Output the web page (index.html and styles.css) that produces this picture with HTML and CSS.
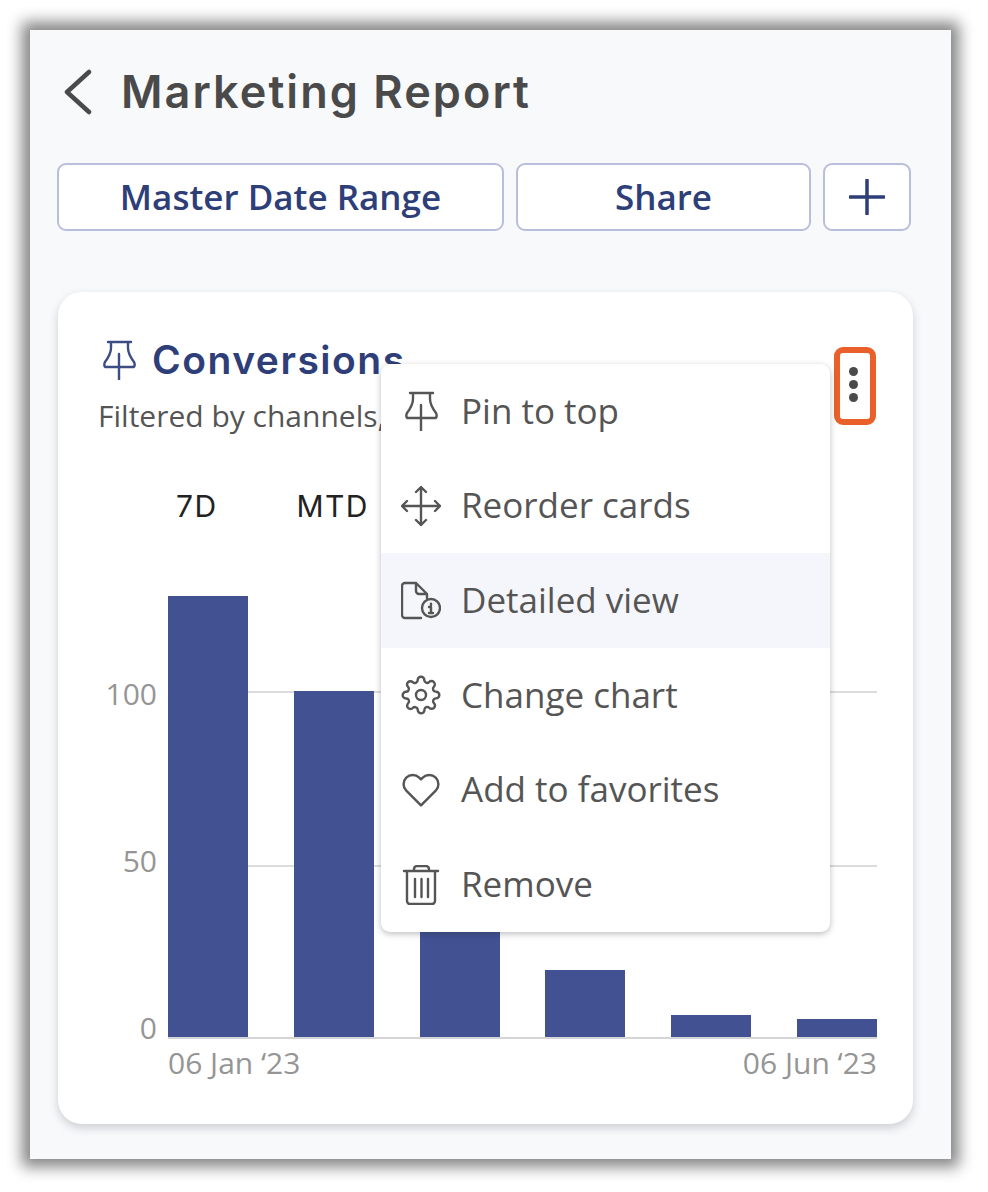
FILE: index.html
```html
<!DOCTYPE html>
<html lang="en">
<head>
<meta charset="utf-8">
<title>Marketing Report</title>
<link rel="stylesheet" href="styles.css">
</head>
<body>
<main class="frame">
  <header class="page-head">
    <svg class="back" viewBox="0 0 30 46" aria-hidden="true"><path d="M26 3 4 23l22 20"/></svg>
    <h1 class="page-title">Marketing Report</h1>
  </header>
  <div class="actions">
    <button class="btn btn-date">Master Date Range</button>
    <button class="btn btn-share">Share</button>
    <button class="btn btn-add" aria-label="Add">
      <svg class="plus" viewBox="0 0 36 36" aria-hidden="true"><path d="M18 1v34M1 18h34"/></svg>
    </button>
  </div>
  <section class="card">
    <div class="card-head">
      <svg class="icon pin-blue" viewBox="0 0 40 40" aria-hidden="true"><path d="M9 2h23M12 2v6c0 6-3 10-6 14-1 2-1 5 1 5h27c2 0 2-3 1-5-3-4-6-8-6-14V2M20 14v26"/></svg>
      <h2 class="card-title">Conversions</h2>
    </div>
    <p class="card-sub">Filtered by channels,</p>
    <div class="ranges">
      <span class="range">7D</span>
      <span class="range">MTD</span>
    </div>
    <div class="chart">
      <div class="y-axis">
        <span>100</span>
        <span>50</span>
        <span>0</span>
      </div>
      <div class="plot">
        <i class="gridline gridline-100"></i>
        <i class="gridline gridline-50"></i>
        <div class="bar" style="height:441px"></div>
        <div class="bar" style="height:346px"></div>
        <div class="bar" style="height:200px"></div>
        <div class="bar" style="height:67px"></div>
        <div class="bar" style="height:22px"></div>
        <div class="bar" style="height:18px"></div>
      </div>
      <div class="x-axis">
        <span>06 Jan ‘23</span>
        <span>06 Jun ‘23</span>
      </div>
    </div>

    <button class="kebab" aria-label="More options"><i></i><i></i><i></i></button>

    <ul class="menu">
      <li class="menu-item">
        <svg class="icon" viewBox="0 0 40 40" aria-hidden="true"><path d="M9 2h23M12 2v6c0 6-3 10-6 14-1 2-1 5 1 5h27c2 0 2-3 1-5-3-4-6-8-6-14V2M20 14v26"/></svg>
        <span class="menu-label">Pin to top</span>
      </li>
      <li class="menu-item">
        <svg class="icon" viewBox="0 0 40 40" aria-hidden="true"><path d="M20 1v38M1 20h38M15 6l5-5 5 5M15 34l5 5 5-5M6 15l-5 5 5 5M34 15l5 5-5 5"/></svg>
        <span class="menu-label">Reorder cards</span>
      </li>
      <li class="menu-item menu-item-active">
        <svg class="icon" viewBox="0 0 40 40" aria-hidden="true"><path d="M20 37H4a3 3 0 0 1-3-3V5a3 3 0 0 1 3-3h11l11 11v4M15 2v8a3 3 0 0 0 3 3h8"/><circle cx="30" cy="27" r="9"/><path d="M28 26h2v6M28 32h4M30 22.600v1.400"/></svg>
        <span class="menu-label">Detailed view</span>
      </li>
      <li class="menu-item">
        <svg class="icon" viewBox="0 0 24 24" aria-hidden="true"><path class="thin" d="M12 15a3 3 0 1 0 0-6 3 3 0 0 0 0 6z"/><path class="thin" d="M19.4 15a1.65 1.65 0 0 0 .33 1.82l.06.06a2 2 0 0 1 0 2.83 2 2 0 0 1-2.83 0l-.06-.06a1.65 1.65 0 0 0-1.82-.33 1.65 1.65 0 0 0-1 1.51V21a2 2 0 0 1-2 2 2 2 0 0 1-2-2v-.09A1.65 1.65 0 0 0 9 19.4a1.65 1.65 0 0 0-1.82.33l-.06.06a2 2 0 0 1-2.83 0 2 2 0 0 1 0-2.83l.06-.06a1.65 1.65 0 0 0 .33-1.82 1.65 1.65 0 0 0-1.51-1H3a2 2 0 0 1-2-2 2 2 0 0 1 2-2h.09A1.65 1.65 0 0 0 4.6 9a1.65 1.65 0 0 0-.33-1.82l-.06-.06a2 2 0 0 1 0-2.83 2 2 0 0 1 2.83 0l.06.06a1.65 1.65 0 0 0 1.82.33H9a1.65 1.65 0 0 0 1-1.51V3a2 2 0 0 1 2-2 2 2 0 0 1 2 2v.09a1.65 1.65 0 0 0 1 1.51 1.65 1.65 0 0 0 1.82-.33l.06-.06a2 2 0 0 1 2.83 0 2 2 0 0 1 0 2.83l-.06.06a1.65 1.65 0 0 0-.33 1.82V9a1.65 1.65 0 0 0 1.51 1H21a2 2 0 0 1 2 2 2 2 0 0 1-2 2h-.09a1.65 1.65 0 0 0-1.51 1z"/></svg>
        <span class="menu-label">Change chart</span>
      </li>
      <li class="menu-item">
        <svg class="icon" viewBox="0 0 24 24" aria-hidden="true"><path class="thin" d="M20.84 4.61a5.5 5.5 0 0 0-7.78 0L12 5.67l-1.06-1.06a5.5 5.5 0 0 0-7.78 7.78l1.06 1.06L12 21.23l7.78-7.78 1.06-1.06a5.5 5.5 0 0 0 0-7.78z"/></svg>
        <span class="menu-label">Add to favorites</span>
      </li>
      <li class="menu-item">
        <svg class="icon" viewBox="0 0 40 40" aria-hidden="true"><path d="M3 6h34M13 6V4a3 3 0 0 1 3-3h9a3 3 0 0 1 3 3v2M6 6v30a3 3 0 0 0 3 3h22a3 3 0 0 0 3-3V6M14 14v18M20.500 14v18M27 14v18"/></svg>
        <span class="menu-label">Remove</span>
      </li>
    </ul>
  </section>
</main>
</body>
</html>
```
FILE: styles.css
```css
* {
  box-sizing: border-box;
}

html,
body {
  margin: 0;
  background: #fff;
}

body {
  padding: 30px 37px 33px 30px;
  font-family: "Open Sans", "Liberation Sans", sans-serif;
}

.frame {
  width: 921px;
  height: 1129px;
  padding: 32px 0 0 27px;
  background: #f8f9fb;
  box-shadow: 0 0 14px 8px #858585;
}

.page-head {
  display: flex;
  align-items: center;
  height: 60px;
  padding-left: 6px;
}

.back {
  width: 30px;
  height: 46px;
  fill: none;
  stroke: #4a4a4a;
  stroke-width: 4.5;
  stroke-linecap: round;
  stroke-linejoin: round;
}

.page-title {
  margin: 0 0 0 28px;
  font-family: Inter, "Liberation Sans", sans-serif;
  font-size: 45px;
  font-weight: 600;
  letter-spacing: 2.05px;
  line-height: 60px;
  color: #4a4a4a;
}

.actions {
  display: flex;
  gap: 12px;
  margin-top: 41px;
}

.btn {
  display: flex;
  align-items: center;
  justify-content: center;
  height: 68px;
  padding: 0 0 2px;
  background: #fff;
  border: 2px solid #b9bedd;
  border-radius: 9px;
  font-family: "Open Sans", "Liberation Sans", sans-serif;
  font-size: 35px;
  font-weight: 600;
  color: #2e3e78;
}

.btn-date {
  width: 447px;
}

.btn-share {
  width: 295px;
}

.btn-add {
  width: 88px;
  padding: 0;
}

.plus {
  width: 36px;
  height: 36px;
  fill: none;
  stroke: #2e3e78;
  stroke-width: 3.5;
  stroke-linecap: round;
}

.card {
  position: relative;
  width: 855px;
  height: 832px;
  margin: 61px 0 0 1px;
  padding: 48px 36px 43px 40px;
  background: #fff;
  border-radius: 24px;
  box-shadow: 0 4px 10px rgba(60, 60, 70, 0.22);
}

.card-head {
  display: flex;
  align-items: center;
  gap: 13px;
  height: 40px;
  padding-left: 4px;
}

.icon {
  flex: none;
  width: 40px;
  height: 40px;
  fill: none;
  stroke: #555;
  stroke-width: 2.4;
  stroke-linecap: round;
  stroke-linejoin: round;
}

.icon .thin {
  stroke-width: 1.45;
}

.pin-blue {
  margin-left: -3px;
  stroke: #3c4d86;
}

.card-title {
  margin: 0;
  font-family: Inter, "Liberation Sans", sans-serif;
  font-size: 39px;
  font-weight: 600;
  letter-spacing: 1.5px;
  line-height: 40px;
  color: #2e3e78;
}

.card-sub {
  margin: 18px 0 0;
  font-size: 30px;
  line-height: 36px;
  color: #555;
}

.ranges {
  display: flex;
  gap: 79px;
  margin-top: 54px;
  padding-left: 78px;
  font-family: Inter, "Liberation Sans", sans-serif;
  font-size: 30px;
  font-weight: 400;
  letter-spacing: 1.4px;
  line-height: 36px;
  color: #222;
}

.chart {
  display: grid;
  grid-template-columns: 59px 709px;
  column-gap: 11px;
  margin-top: 72px;
}

.y-axis {
  display: flex;
  flex-direction: column;
  align-self: end;
  gap: 131px;
  margin-bottom: -7px;
  font-size: 30px;
  font-weight: 400;
  line-height: 36px;
  text-align: right;
  color: #959595;
}

.plot {
  position: relative;
  display: flex;
  align-items: flex-end;
  justify-content: space-between;
  height: 443px;
  border-bottom: 2px solid #d5d5d8;
}

.gridline {
  position: absolute;
  left: 0;
  right: 0;
  height: 2px;
  background: #dcdcdc;
}

.gridline-100 {
  bottom: 344px;
}

.gridline-50 {
  bottom: 170px;
}

.bar {
  position: relative;
  width: 80px;
  background: #415192;
}

.x-axis {
  grid-column: 2;
  display: flex;
  justify-content: space-between;
  margin-top: 6px;
  font-size: 30px;
  font-weight: 400;
  line-height: 36px;
  color: #959595;
}

.kebab {
  position: absolute;
  left: 776px;
  top: 55px;
  display: flex;
  flex-direction: column;
  align-items: center;
  gap: 4px;
  width: 42px;
  height: 78px;
  padding: 14px 4px 0 0;
  background: #fff;
  border: 6px solid #e9602a;
  border-radius: 9px;
}

.kebab i {
  width: 9px;
  height: 9px;
  border-radius: 50%;
  background: #4a4a4a;
}

.menu {
  position: absolute;
  left: 323px;
  top: 72px;
  display: grid;
  grid-template-rows: repeat(6, 1fr);
  width: 449px;
  height: 568px;
  margin: 0;
  padding: 0;
  list-style: none;
  background: #fff;
  border-radius: 9px;
  box-shadow: 0 2px 6px rgba(40, 40, 50, 0.3);
}

.menu-item {
  display: flex;
  align-items: center;
  gap: 20px;
  padding-left: 20px;
  font-size: 35px;
  color: #555;
}

.menu-label {
  margin-top: -2px;
}

.menu-item-active {
  background: #f5f6fb;
}
```
